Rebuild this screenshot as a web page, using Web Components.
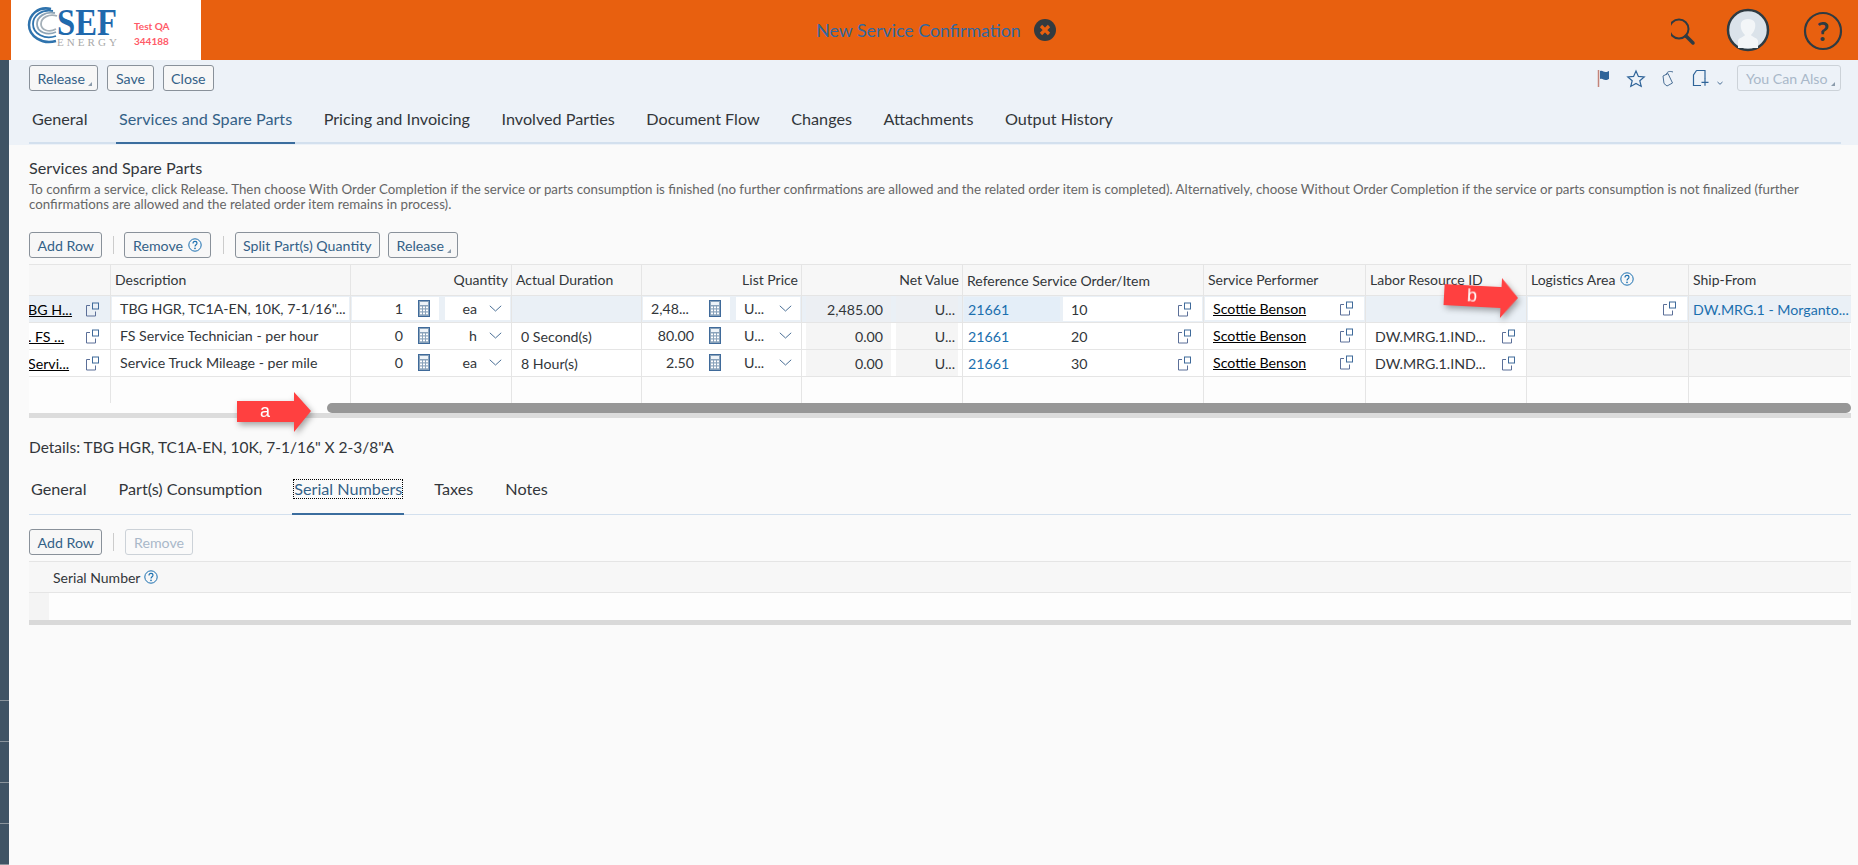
<!DOCTYPE html>
<html lang="en">
<head>
<meta charset="utf-8">
<title>New Service Confirmation</title>
<style>
  html, body { margin: 0; height: 100%; overflow: hidden; background: #fafafa; }
  body { font-family: "Lato", "Liberation Sans", sans-serif; color: #32363a; }
</style>
</head>
<body>
<app-shell></app-shell>

<script>
// shared icons
const ICONS = {
  copy: `<svg width="15" height="15" viewBox="0 0 15 15" fill="none"><rect x="7.5" y="1" width="6" height="6" stroke="#3f6a9a"/><path d="M5 3.500H1.500V14H10.500V9.500" stroke="#5b6f98"/></svg>`,
  calc: `<svg width="12" height="17" viewBox="0 0 12 17"><rect x=".5" y=".5" width="11" height="16" fill="#8aa3bb" stroke="#3f6a9a"/><rect x="2" y="2" width="8" height="3" fill="#eef3f8"/><g fill="#fff"><rect x="2" y="6.500" width="2" height="1.800"/><rect x="5" y="6.500" width="2" height="1.800"/><rect x="8" y="6.500" width="2" height="1.800"/><rect x="2" y="9.500" width="2" height="1.800"/><rect x="5" y="9.500" width="2" height="1.800"/><rect x="8" y="9.500" width="2" height="1.800"/><rect x="2" y="12.500" width="2" height="1.800"/><rect x="5" y="12.500" width="2" height="1.800"/><rect x="8" y="12.500" width="2" height="1.800"/></g></svg>`,
  chevron: `<svg width="13" height="7" viewBox="0 0 13 7" fill="none"><path d="M.8.8 6.500 6 12.200.8" stroke="#4a6f96"/></svg>`,
  help: `<svg width="14" height="14" viewBox="0 0 14 14" fill="none"><circle cx="7" cy="7" r="6.200" stroke="#1a6fb0"/><path d="M5 5.400c0-1.200.9-2 2-2s2 .8 2 1.900c0 1.500-2 1.500-2 3.200" stroke="#1a6fb0" stroke-width="1.100"/><circle cx="7" cy="10.400" r=".8" fill="#1a6fb0"/></svg>`
};

class SapButton extends HTMLElement {
  constructor() {
    super();
    this.attachShadow({ mode: 'open' });
  }
  connectedCallback() {
    const menu = this.hasAttribute('menu');
    this.shadowRoot.innerHTML = `
      <style>
        :host {
          display: inline-flex;
          align-items: center;
          box-sizing: border-box;
          height: 26px;
          padding: 0 7.500px;
          border: 1px solid #89919a;
          border-radius: 3px;
          background: #f7f7f7;
          color: #346187;
          font-size: 14.200px;
          white-space: nowrap;
        }
        :host([menu]) { padding-right: 8.500px; }
        :host([disabled]) {
          color: #a9b8c9;
          border-color: #ccd2d8;
          background: transparent;
        }
        .corner {
          width: 0;
          height: 0;
          margin: 11px -3px 0 3px;
          border-left: 4px solid transparent;
          border-bottom: 4px solid #8b9bab;
        }
        svg { margin-left: 5px; }
      </style>
      <slot></slot>${this.hasAttribute('help') ? ICONS.help : ''}${menu ? '<span class="corner"></span>' : ''}
    `;
  }
}
customElements.define('sap-button', SapButton);

class SapTabs extends HTMLElement {
  constructor() {
    super();
    this.attachShadow({ mode: 'open' });
  }
  connectedCallback() {
    const active = Number(this.getAttribute('active'));
    const tabs = this.getAttribute('tabs').split('|');
    const focus = this.hasAttribute('focus');
    this.shadowRoot.innerHTML = `
      <style>
        :host {
          display: flex;
          gap: var(--tab-gap, 25.500px);
          border-bottom: var(--line, 2px) solid #d3e0ee;
          font-size: 16.200px;
        }
        .tab {
          padding: 0 var(--tab-pad, 3px);
          height: var(--tab-h, 51px);
          line-height: var(--tab-lh, 56px);
          margin-bottom: calc(0px - var(--line, 2px));
          border-bottom: 2px solid transparent;
          white-space: nowrap;
        }
        .on { color: #346187; border-bottom-color: #3b6d9e; }
        .focus {
          display: inline-block;
          line-height: 18px;
          outline: 1px dotted #000;
        }
      </style>
      ${tabs.map((t, i) => `<div class="tab ${i === active ? 'on' : ''}">${i === active && focus ? `<span class="focus">${t}</span>` : t}</div>`).join('')}
    `;
  }
}
customElements.define('sap-tabs', SapTabs);

class ShellBar extends HTMLElement {
  constructor() {
    super();
    this.attachShadow({ mode: 'open' });
  }
  connectedCallback() {
    this.shadowRoot.innerHTML = `
      <style>
        :host {
          display: flex;
          height: 60px;
          padding-left: 11px;
          background: #e8600f;
        }
        .logo {
          width: 190px;
          background: #fff;
          flex: none;
        }
        .title {
          flex: 1;
          display: flex;
          align-items: center;
          justify-content: center;
          gap: 13px;
          color: #33689f;
          font-size: 17.800px;
        }
        .right { width: 187px; flex: none; }
        svg { display: block; }
      </style>
      <div class="logo">
        <svg width="190" height="60" viewBox="0 0 190 60">
          <g fill="none">
            <path d="M40 9C27 6 18 15 18 25c0 11 13 20 27 16" stroke="#2f73ad" stroke-width="2.500"/>
            <path d="M42 11C30 9 22 16 22 24c0 10 12 16 23 12" stroke="#2f73ad" stroke-width="1.800"/>
            <path d="M44 13C34 11 26 17 26 24c0 8 10 12 19 8" stroke="#8ea4b6" stroke-width="1.800"/>
            <path d="M46 16c-8-3-16 2-16 8s8 9 15 5" stroke="#a5b0b9" stroke-width="1.800"/>
          </g>
          <text x="46" y="35" font-family="Liberation Serif" font-weight="700" font-size="37" fill="#1f69ad" textLength="60" lengthAdjust="spacingAndGlyphs">SEF</text>
          <text x="46" y="46" font-family="Liberation Serif" font-size="11" fill="#a8a8a8" textLength="60">ENERGY</text>
          <text x="123" y="30" font-family="Lato" font-weight="700" font-size="10" fill="#ff5a68">Test QA</text>
          <text x="123" y="45" font-family="Lato" font-weight="700" font-size="10" fill="#ff5a68">344188</text>
        </svg>
      </div>
      <div class="title">
        <span>New Service Confirmation</span>
        <svg width="22" height="22" viewBox="0 0 22 22"><circle cx="11" cy="11" r="11" fill="#333b40"/><path d="M7 7l8 8M15 7l-8 8" stroke="#e8600f" stroke-width="3.200"/></svg>
      </div>
      <div class="right">
        <svg width="187" height="60" viewBox="0 0 187 60" fill="none">
          <circle cx="8" cy="29" r="9.500" stroke="#2f3b42" stroke-width="2"/>
          <path d="M15 36l7 7" stroke="#2f3b42" stroke-width="3.500" stroke-linecap="round"/>
          <circle cx="77" cy="30" r="20" fill="#dbe3ea" stroke="#2f3b42" stroke-width="2.500"/>
          <path d="M67 48v-7c0-3 6-4 7-6-3-3-5-7-4-12 1-3 4-4 7-4s6 1 7 4c1 5-1 9-4 12 1 2 7 3 7 6v7z" fill="#f3f6f8"/>
          <circle cx="152" cy="31" r="18" stroke="#2f3b42" stroke-width="2.200"/>
          <text x="152" y="41" font-family="Lato" font-weight="700" font-size="27" fill="#2f3b42" text-anchor="middle">?</text>
        </svg>
      </div>
    `;
  }
}
customElements.define('shell-bar', ShellBar);

class ObjectActions extends HTMLElement {
  constructor() {
    super();
    this.attachShadow({ mode: 'open' });
  }
  connectedCallback() {
    this.shadowRoot.innerHTML = `
      <style>
        :host {
          display: flex;
          justify-content: space-between;
          align-items: center;
          height: 26px;
          padding-top: 5px;
        }
        .left { display: flex; gap: 9px; }
        .right { display: flex; align-items: center; gap: 10px; }
        svg { display: block; }
      </style>
      <div class="left"><slot name="left"></slot></div>
      <div class="right">
        <svg width="130" height="26" viewBox="0 0 130 26" fill="none">
          <path d="M1.500 5v17" stroke="#c4847a" stroke-width="1.500"/>
          <path d="M3 6c2.500-1 3.500 1 5.500 1 1.500 0 2.500-.5 3.500-1v8c-1 .5-2 1-3.500 1-2 0-3-2-5.500-1z" fill="#2f6499"/>
          <path d="M39 6l2.400 5.400 5.800.5-4.400 3.800 1.400 5.700-5.200-3-5.200 3 1.400-5.700-4.400-3.800 5.800-.5z" stroke="#2f6499" stroke-width="1.200"/>
          <path d="M66 11l5-2.500 4.500 9.500-5.500 3-3-2.500zM69 10c1-4 4-4 7-3" stroke="#4a6f96"/>
          <path d="M99.500 5.500H108V14M99.500 5.500l-3 4.500v10.500H104" stroke="#2f6499" stroke-width="1.200"/>
          <path d="M104.500 17.300h7M108 13.800v7" stroke="#2f6499" stroke-width="1.200"/>
          <path d="M120.500 17l2.500 2.300 2.500-2.300" stroke="#4a6f96"/>
        </svg>
        <slot name="right"></slot>
      </div>
    `;
  }
}
customElements.define('object-actions', ObjectActions);

class PartsTable extends HTMLElement {
  constructor() {
    super();
    this.attachShadow({ mode: 'open' });
  }
  connectedCallback() {
    const heads = [
      ['', ''], ['Description', ''], ['Quantity', 'r'], ['Actual Duration', ''], ['List Price', 'r'],
      ['Net Value', 'r'], ['Reference Service Order/Item', 'low'], ['Service Performer', ''],
      ['Labor Resource ID', ''], [`Logistics Area ${ICONS.help}`, ''], ['Ship-From', '']
    ];
    const rows = [
      { sel: true, id: 'BG H...', desc: 'TBG HGR, TC1A-EN, 10K, 7-1/16"...', q: '1', u: 'ea', dur: '', price: '2,48...', net: '2,485.00', item: '10', labor: '' },
      { id: '. FS ...', desc: 'FS Service Technician - per hour', q: '0', u: 'h', dur: '0 Second(s)', price: '80.00', net: '0.00', item: '20', labor: 'DW.MRG.1.IND...' },
      { id: 'Servi...', desc: 'Service Truck Mileage - per mile', q: '0', u: 'ea', dur: '8 Hour(s)', price: '2.50', net: '0.00', item: '30', labor: 'DW.MRG.1.IND...' }
    ];
    const body = rows.map(r => {
      const w = r.sel ? 'white' : '';
      return `<div class="row ${r.sel ? 'sel' : ''}">
        <div class="c id"><u class="clip">${r.id}</u>${ICONS.copy}</div>
        <div class="c box"><span class="field ${w} grow"><span class="val">${r.desc}</span></span></div>
        <div class="c split box">
          <span class="field ${w} right"><span class="val q">${r.q}</span>${ICONS.calc}</span>
          <span class="field ${w} unit"><span class="val u">${r.u}</span>${ICONS.chevron}</span>
        </div>
        <div class="c pad">${r.dur}</div>
        <div class="c split box">
          <span class="field ${w} right"><span class="val q ${r.sel ? 'left' : ''}">${r.price}</span>${ICONS.calc}</span>
          <span class="field ${w} unit cur"><span class="val">U...</span>${ICONS.chevron}</span>
        </div>
        <div class="c net"><span class="ro amount">${r.net}</span><span class="ro cur2">U...</span></div>
        <div class="c ref"><a class="${r.sel ? 'tint' : ''}">21661</a><span class="field ${w} grow item"><span class="val">${r.item}</span>${ICONS.copy}</span></div>
        <div class="c box"><span class="field ${w} grow"><u class="val">Scottie Benson</u>${ICONS.copy}</span></div>
        <div class="c pad labor">${r.labor ? `<span class="val">${r.labor}</span>${ICONS.copy}` : ''}</div>
        <div class="c ${r.sel ? 'box' : 'grey'}">${r.sel ? `<span class="field white grow"><span class="val"></span>${ICONS.copy}</span>` : ''}</div>
        <div class="c ${r.sel ? 'pad link' : 'grey'}">${r.sel ? 'DW.MRG.1 - Morganto...' : ''}</div>
      </div>`;
    }).join('');

    this.shadowRoot.innerHTML = `
      <style>
        :host {
          display: block;
          font-size: 14.200px;
          --cols: 82px 240px 161px 130px 160px 161px 241px 162px 161px 162px 161px;
        }
        .row {
          display: grid;
          grid-template-columns: var(--cols);
          height: 27px;
          box-sizing: border-box;
          background: #fff;
          border-bottom: 1px solid #e5e5e5;
        }
        .row.head {
          height: 32px;
          background: #f7f7f7;
          border-top: 1px solid #e5e5e5;
          border-bottom: 1px solid #e5e5e5;
          font-size: 14px;
        }
        .row.sel { background: #eaf0f6; }
        .row.blank { height: 26px; background: #fdfdfd; border-bottom: 0; }
        .c {
          display: flex;
          align-items: center;
          min-width: 0;
          border-right: 1px solid #e5e5e5;
          white-space: nowrap;
          overflow: hidden;
        }
        .c:last-child { border-right: 0; }
        .head .c { padding: 0 3px 2px 4px; }
        .head .low { padding-bottom: 0; }
        .head .r { justify-content: flex-end; }
        .head svg { margin-left: 5px; }
        .id { justify-content: space-between; padding-right: 10px; }
        .clip { margin-left: -1px; color: #000; }
        .box { padding: 1px 1px 2px 1px; }
        .split { display: grid; grid-template-columns: 87px 1fr; gap: 6px; }
        .field {
          display: flex;
          align-items: center;
          justify-content: space-between;
          height: 100%;
          padding: 0 10px 0 8px;
          box-sizing: border-box;
          min-width: 0;
        }
        .field.white { background: #fff; }
        .grow { flex: 1; }
        .right { padding-right: 9px; }
        .right .q { flex: 1; text-align: right; padding-right: 15px; }
        .right .q.left { text-align: left; }
        .unit { padding: 0 8px 0 15px; }
        .u { flex: none; width: 17px; text-align: right; }
        .cur { padding-left: 8px; }
        .pad { padding-left: 9px; }
        .labor { justify-content: space-between; padding-right: 10px; }
        .net { display: grid; grid-template-columns: 85px 1fr; gap: 5px; padding: 0 4px; }
        .ro {
          height: 100%;
          display: flex;
          align-items: center;
          justify-content: flex-end;
          background: #f5f5f5;
          padding-right: 8px;
        }
        .sel .ro { background: #eceff3; }
        .cur2 { padding-right: 3px; }
        .ref { padding: 1px; gap: 3px; }
        a { color: #1b6fae; flex: none; width: 96px; height: 100%; display: flex; align-items: center; padding-left: 4px; box-sizing: border-box; }
        a.tint { background: #e4eef8; }
        .item .val { flex: none; }
        .grey { background: #f5f5f5; }
        .link { color: #1b6fae; padding-left: 4px; }
        .blank .c { background: #fdfdfd; }
        u.val { color: #000; }
        svg { flex: none; display: block; }

        .scroll {
          height: 15px;
          box-sizing: border-box;
          padding-left: 298px;
          background: #fdfdfd;
          border-bottom: 5px solid #dcdcdc;
        }
        .thumb { height: 10px; border-radius: 5px; background: #979797; }
      </style>
      <div class="row head">
        ${heads.map(h => `<div class="c ${h[1]}">${h[0]}</div>`).join('')}
      </div>
      ${body}
      <div class="row blank">${heads.map(() => '<div class="c"></div>').join('')}</div>
      <div class="scroll"><div class="thumb"></div></div>
    `;
  }
}
customElements.define('parts-table', PartsTable);

class SerialTable extends HTMLElement {
  constructor() {
    super();
    this.attachShadow({ mode: 'open' });
  }
  connectedCallback() {
    this.shadowRoot.innerHTML = `
      <style>
        :host { display: block; font-size: 14px; }
        .row { display: grid; grid-template-columns: 20px 1fr; }
        .head {
          height: 32px;
          box-sizing: border-box;
          background: #f7f7f7;
          border-top: 1px solid #e5e5e5;
          border-bottom: 1px solid #e5e5e5;
        }
        .name { display: flex; align-items: center; gap: 4px; padding-left: 4px; }
        .body { height: 27px; background: #fdfdfd; }
        .body div:first-child { background: #f4f4f4; }
        .foot { height: 5px; background: #d9d9d9; }
        svg { display: block; }
      </style>
      <div class="row head"><div></div><div class="name">Serial Number ${ICONS.help}</div></div>
      <div class="row body"><div></div><div></div></div>
      <div class="foot"></div>
    `;
  }
}
customElements.define('serial-table', SerialTable);

class RedArrow extends HTMLElement {
  constructor() {
    super();
    this.attachShadow({ mode: 'open' });
  }
  connectedCallback() {
    const label = this.getAttribute('label');
    const angle = this.getAttribute('angle') || 0;
    this.shadowRoot.innerHTML = `
      <style>
        :host {
          display: block;
          position: absolute;
          left: var(--x);
          top: var(--y);
          width: 74px;
          height: 40px;
          transform: rotate(${angle}deg);
          filter: drop-shadow(2px 3px 3px rgba(0,0,0,.35));
        }
        svg { display: block; }
      </style>
      <svg width="74" height="40" viewBox="0 0 74 40">
        <path d="M0 9H57V0L74 19 57 40V30H0z" fill="#ff4040"/>
        <text x="28" y="25" font-family="Liberation Sans" font-size="18" fill="#fff" text-anchor="middle">${label}</text>
      </svg>
    `;
  }
}
customElements.define('red-arrow', RedArrow);

class AppShell extends HTMLElement {
  constructor() {
    super();
    this.attachShadow({ mode: 'open' });
  }
  connectedCallback() {
    this.shadowRoot.innerHTML = `
      <style>
        :host {
          display: flex;
          flex-direction: column;
          height: 865px;
          position: relative;
          overflow: hidden;
          background: #fafafa;
        }
        main { flex: 1; display: flex; min-height: 0; }
        .strip {
          width: 9px;
          flex: none;
          background:
            linear-gradient(#8a949c, #8a949c) 0 640px / 100% 1px no-repeat,
            linear-gradient(#8a949c, #8a949c) 0 681px / 100% 1px no-repeat,
            linear-gradient(#8a949c, #8a949c) 0 722px / 100% 1px no-repeat,
            linear-gradient(#8a949c, #8a949c) 0 763px / 100% 1px no-repeat,
            linear-gradient(#8a949c, #8a949c) 0 804px / 100% 1px no-repeat,
            #3f5364;
        }
        .content { flex: 1; min-width: 0; }
        .top {
          background: #edf2f8;
          padding: 0 17px 0 20px;
          height: 85px;
          box-sizing: border-box;
        }
        .page { padding: 0 7px 0 20px; }
        h2 {
          margin: 14px 0 0;
          font-weight: 400;
          font-size: 16.200px;
          line-height: 18px;
        }
        p {
          margin: 5px 0 0;
          width: 1815px;
          font-size: 13.300px;
          line-height: 15px;
          color: #666;
        }
        .bar { display: flex; align-items: center; gap: 11px; }
        .bar.one { margin-top: 20px; }
        .bar.two { margin: 14px 0 6px; }
        .sep { width: 1px; height: 18px; background: #ccc; }
        .rm { margin: 0 1px 0 -1px; }
        .rel { margin-left: -3px; }
        parts-table { margin-top: 6px; }
        h3 {
          margin: 20px 0 0;
          font-weight: 400;
          font-size: 15.500px;
          line-height: 18px;
        }
        .tabs-sub {
          --line: 1px;
          --tab-h: 46px;
          --tab-lh: 44px;
          --tab-gap: 28px;
          --tab-pad: 2px;
          margin-top: 11px;
        }
        red-arrow.a { --x: 237px; --y: 392px; }
        red-arrow.b { --x: 1444px; --y: 277px; }
      </style>
      <shell-bar></shell-bar>
      <main>
        <div class="strip"></div>
        <div class="content">
          <div class="top">
            <object-actions>
              <sap-button slot="left" menu>Release</sap-button>
              <sap-button slot="left">Save</sap-button>
              <sap-button slot="left">Close</sap-button>
              <sap-button slot="right" menu disabled>You Can Also</sap-button>
            </object-actions>
            <sap-tabs class="tabs-main" active="1" tabs="General|Services and Spare Parts|Pricing and Invoicing|Involved Parties|Document Flow|Changes|Attachments|Output History"></sap-tabs>
          </div>
          <div class="page">
            <h2>Services and Spare Parts</h2>
            <p>To confirm a service, click Release. Then choose With Order Completion if the service or parts consumption is finished (no further confirmations are allowed and the related order item is completed). Alternatively, choose Without Order Completion if the service or parts consumption is not finalized (further confirmations are allowed and the related order item remains in process).</p>
            <div class="bar one">
              <sap-button>Add Row</sap-button><span class="sep"></span>
              <sap-button class="rm" help>Remove</sap-button><span class="sep"></span>
              <sap-button>Split Part(s) Quantity</sap-button>
              <sap-button class="rel" menu>Release</sap-button>
            </div>
            <parts-table></parts-table>
            <h3>Details: TBG HGR, TC1A-EN, 10K, 7-1/16" X 2-3/8"A</h3>
            <sap-tabs class="tabs-sub" active="2" focus tabs="General|Part(s) Consumption|Serial Numbers|Taxes|Notes"></sap-tabs>
            <div class="bar two">
              <sap-button>Add Row</sap-button><span class="sep"></span>
              <sap-button disabled>Remove</sap-button>
            </div>
            <serial-table></serial-table>
          </div>
        </div>
      </main>
      <red-arrow class="a" label="a"></red-arrow>
      <red-arrow class="b" label="b" angle="3"></red-arrow>
    `;
  }
}
customElements.define('app-shell', AppShell);
</script>
</body>
</html>
